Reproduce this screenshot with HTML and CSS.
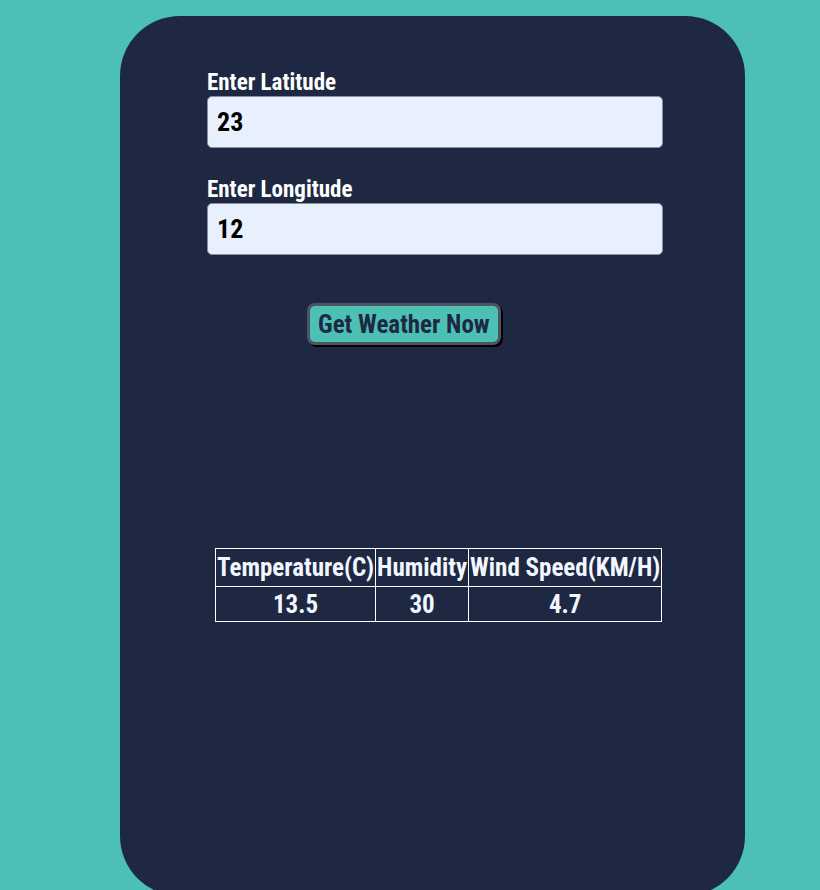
FILE: index.html
```html
<!DOCTYPE html>
<html>
<head>
<meta charset="utf-8">
<link rel="stylesheet" href="styles.css">
</head>
<body>
<div class="card">
  <div class="form">
    <label class="label">Enter Latitude</label>
    <input class="field" type="text" value="23">
    <label class="label second">Enter Longitude</label>
    <input class="field" type="text" value="12">
    <button class="btn">Get Weather Now</button>
    <table class="results">
      <tr><th>Temperature(C)</th><th>Humidity</th><th>Wind Speed(KM/H)</th></tr>
      <tr><td>13.5</td><td>30</td><td>4.7</td></tr>
    </table>
  </div>
</div>
</body>
</html>
```
FILE: styles.css
```css
html, body {
  margin: 0;
  padding: 0;
  background: #4cc0b4;
  height: 890px;
  overflow: hidden;
}
body {
  font-family: "Roboto", sans-serif;
  font-stretch: condensed;
  font-weight: bold;
}
.card {
  margin: 16px 0 0 120px;
  width: 625px;
  height: 880px;
  background: #1f2842;
  border-radius: 60px;
  padding: 0 0 0 87px;
  box-sizing: border-box;
}
.form {
  width: 456px;
  display: flex;
  flex-direction: column;
  align-items: flex-start;
  padding-top: 52px;
}
.label {
  color: #ffffff;
  font-size: 23px;
  line-height: 28px;
  padding-top: 1px;
  margin-bottom: -1px;
  display: block;
}
.label.second {
  margin-top: 27px;
}
.field {
  width: 456px;
  height: 52px;
  box-sizing: border-box;
  background: #e8f0fe;
  border: 1px solid #8a8f99;
  border-radius: 5px;
  padding: 0 9px;
  font-family: inherit;
  font-stretch: condensed;
  font-weight: bold;
  font-size: 26px;
  color: #000;
  outline: none;
}
.btn {
  margin: 48px 0 0 100px;
  height: 42px;
  padding: 0 8px;
  background: #4cc0b4;
  color: #1f2842;
  border: 3px solid #4f5560;
  border-radius: 8px;
  box-shadow: 2px 2px 0 #000;
  font-family: inherit;
  font-stretch: condensed;
  font-weight: bold;
  font-size: 25px;
}
.results {
  margin: 203px 0 0 8px;
  border-collapse: collapse;
  color: #f2f6ff;
  font-size: 25px;
}
.results th, .results td {
  border: 1px solid #ffffff;
  padding: 0 1px;
  text-align: center;
}
.results th { height: 37px; }
.results td { height: 34px; }
```
